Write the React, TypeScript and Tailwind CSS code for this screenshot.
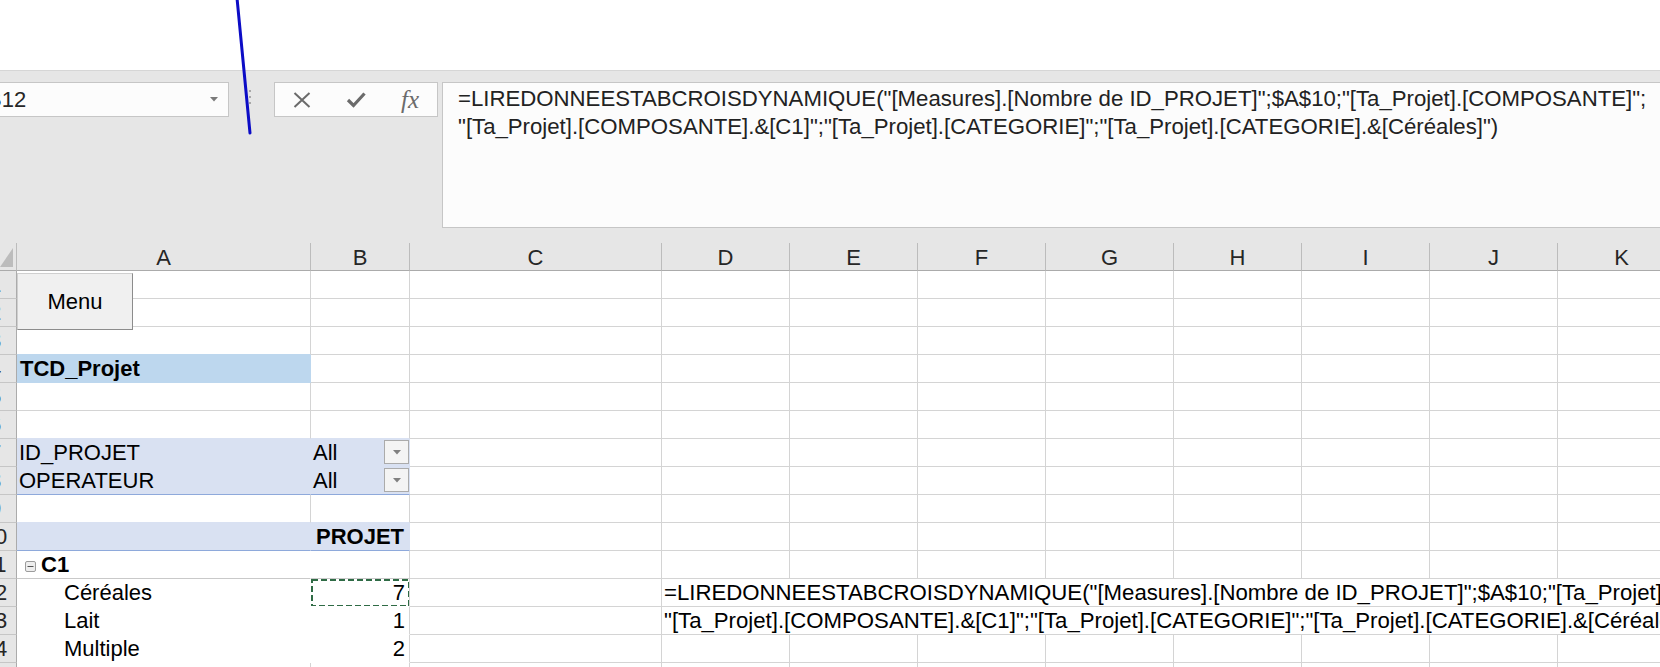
import React from 'react';

const formulaLine1 =
  '=LIREDONNEESTABCROISDYNAMIQUE("[Measures].[Nombre de ID_PROJET]";$A$10;"[Ta_Projet].[COMPOSANTE]";';
const formulaLine2 =
  '"[Ta_Projet].[COMPOSANTE].&[C1]";"[Ta_Projet].[CATEGORIE]";"[Ta_Projet].[CATEGORIE].&[Céréales]")';

const columns: { name: string; w: string }[] = [
  { name: 'A', w: 'w-[294px]' },
  { name: 'B', w: 'w-[99px]' },
  { name: 'C', w: 'w-[252px]' },
  { name: 'D', w: 'w-[128px]' },
  { name: 'E', w: 'w-[128px]' },
  { name: 'F', w: 'w-[128px]' },
  { name: 'G', w: 'w-[128px]' },
  { name: 'H', w: 'w-[128px]' },
  { name: 'I', w: 'w-[128px]' },
  { name: 'J', w: 'w-[128px]' },
  { name: 'K', w: 'w-[128px]' },
];

// gridline colours per edge
const GRID = 'border-r-[#d4d4d4] border-b-[#d4d4d4]';

interface RowSpec {
  n: number;
  a?: React.ReactNode;
  b?: React.ReactNode;
  aEdge: string;
  bEdge: string;
  aClass?: string;
  bClass?: string;
  wide?: string;
  selected?: boolean;
}

function Cell({
  w,
  edge,
  className = '',
  children,
}: {
  w: string;
  edge: string;
  className?: string;
  children?: React.ReactNode;
}) {
  return (
    <div
      className={`${w} relative shrink-0 h-full border-r border-b ${edge} flex items-end pb-[2px] whitespace-nowrap overflow-hidden leading-[22px] ${className}`}
    >
      {children}
    </div>
  );
}

function RowHead({ n }: { n: number }) {
  return (
    <div className="w-[17px] shrink-0 h-full overflow-hidden bg-[#e6e6e6] border-r border-b border-r-[#ababab] border-b-[#c6c6c6] flex items-end pb-[2px]">
      <div className="w-[44px] -ml-[27px] shrink-0 text-center leading-[22px] text-[#262626]">{n}</div>
    </div>
  );
}

function FilterButton() {
  return (
    <div className="ml-auto self-start mt-[1px] w-[25px] h-[24px] shrink-0 border border-[#ababab] bg-[#f4f4f4] flex items-center justify-center">
      <svg width="8" height="5" viewBox="0 0 8 5">
        <path d="M0 0h8L4 4.5z" fill="#808080" />
      </svg>
    </div>
  );
}

function CollapseToggle() {
  return (
    <svg className="self-end mb-[4px] ml-[8px] mr-[5px] shrink-0" width="11" height="11" viewBox="0 0 11 11">
      <rect x="0.5" y="0.5" width="10" height="10" rx="1.5" fill="#eeeeee" stroke="#9c9c9c" />
      <path d="M2.5 5.5h6" stroke="#555" strokeWidth="1" />
    </svg>
  );
}

const rows: RowSpec[] = [
  { n: 1, aEdge: GRID, bEdge: GRID },
  { n: 2, aEdge: GRID, bEdge: GRID },
  { n: 3, aEdge: 'border-r-[#d4d4d4] border-b-[#bdd7ee]', bEdge: GRID },
  {
    n: 4,
    a: <span className="pl-[3px] font-bold">TCD_Projet</span>,
    aEdge: 'border-r-[#bdd7ee] border-b-[#bdd7ee]',
    aClass: 'bg-[#bdd7ee]',
    bEdge: GRID,
  },
  { n: 5, aEdge: GRID, bEdge: GRID },
  {
    n: 6,
    aEdge: 'border-r-[#d4d4d4] border-b-[#d9e1f2]',
    bEdge: 'border-r-[#d4d4d4] border-b-[#d9e1f2]',
  },
  {
    n: 7,
    a: <span className="pl-[2px]">ID_PROJET</span>,
    b: (
      <>
        <span className="pl-[2px]">All</span>
        <FilterButton />
      </>
    ),
    aEdge: 'border-r-[#d9e1f2] border-b-[#d9e1f2]',
    bEdge: 'border-r-[#d9e1f2] border-b-[#d9e1f2]',
    aClass: 'bg-[#d9e1f2]',
    bClass: 'bg-[#d9e1f2]',
  },
  {
    n: 8,
    a: <span className="pl-[2px]">OPERATEUR</span>,
    b: (
      <>
        <span className="pl-[2px]">All</span>
        <FilterButton />
      </>
    ),
    aEdge: 'border-r-[#d9e1f2] border-b-[#8ea9db]',
    bEdge: 'border-r-[#d9e1f2] border-b-[#8ea9db]',
    aClass: 'bg-[#d9e1f2]',
    bClass: 'bg-[#d9e1f2]',
  },
  {
    n: 9,
    aEdge: 'border-r-[#d4d4d4] border-b-[#d9e1f2]',
    bEdge: 'border-r-[#d4d4d4] border-b-[#d9e1f2]',
  },
  {
    n: 10,
    b: <span className="font-bold">PROJET</span>,
    aEdge: 'border-r-[#d9e1f2] border-b-[#8ea9db]',
    bEdge: 'border-r-[#d9e1f2] border-b-[#8ea9db]',
    aClass: 'bg-[#d9e1f2]',
    bClass: 'bg-[#d9e1f2] justify-end pr-[5px]',
  },
  {
    n: 11,
    a: (
      <>
        <CollapseToggle />
        <span className="font-bold">C1</span>
      </>
    ),
    aEdge: 'border-r-white border-b-[#c9c9c9]',
    bEdge: 'border-r-[#d4d4d4] border-b-[#c9c9c9]',
  },
  {
    n: 12,
    a: <span className="pl-[47px]">Céréales</span>,
    b: <span>7</span>,
    aEdge: 'border-r-white border-b-white',
    bEdge: 'border-r-[#d4d4d4] border-b-white',
    bClass: 'justify-end pr-[4px]',
    wide: formulaLine1,
    selected: true,
  },
  {
    n: 13,
    a: <span className="pl-[47px]">Lait</span>,
    b: <span>1</span>,
    aEdge: 'border-r-white border-b-white',
    bEdge: 'border-r-[#d4d4d4] border-b-white',
    bClass: 'justify-end pr-[4px]',
    wide: formulaLine2,
  },
  {
    n: 14,
    a: <span className="pl-[47px]">Multiple</span>,
    b: <span>2</span>,
    aEdge: 'border-r-white border-b-white',
    bEdge: 'border-r-[#d4d4d4] border-b-white',
    bClass: 'justify-end pr-[4px]',
  },
  { n: 15, aEdge: GRID, bEdge: GRID },
];

function FormulaBar() {
  return (
    <div className="h-[173px] shrink-0 bg-[#e6e6e6] border-t border-[#d6d6d6] pt-[11px] flex items-start">
      {/* name box */}
      <div className="w-[229px] h-[35px] shrink-0 bg-[#fcfcfc] border-y border-r border-[#c6c6c6] flex items-center overflow-hidden">
        <span className="-ml-[13px] leading-[22px] text-[#262626]">B12</span>
        <svg className="ml-auto mr-[10px]" width="8" height="5" viewBox="0 0 8 5">
          <path d="M0 0h8L4 4.5z" fill="#7a7a7a" />
        </svg>
      </div>

      {/* splitter grip */}
      <div className="w-[45px] h-[35px] shrink-0 flex flex-col pl-[20px] pt-[8px] gap-[4px]">
        <div className="w-[2px] h-[2px] bg-[#a8a8a8]" />
        <div className="w-[2px] h-[2px] bg-[#a8a8a8]" />
        <div className="w-[2px] h-[2px] bg-[#a8a8a8]" />
      </div>

      {/* cancel / enter / insert function */}
      <div className="w-[164px] h-[35px] shrink-0 bg-[#fcfcfc] border border-[#c6c6c6] flex items-center">
        <div className="w-[54px] flex justify-center">
          <svg width="18" height="16" viewBox="0 0 18 16">
            <path d="M1.5 1l15 14M16.5 1l-15 14" stroke="#6b6b6b" strokeWidth="2" />
          </svg>
        </div>
        <div className="w-[54px] flex justify-center">
          <svg width="20" height="17" viewBox="0 0 20 17">
            <path d="M2 9l5.5 5.5L18.5 2.5" fill="none" stroke="#6b6b6b" strokeWidth="3.2" />
          </svg>
        </div>
        <div className="w-[54px] flex justify-center">
          <span className="font-['Liberation_Serif',serif] italic text-[25px] leading-[25px] text-[#6b6b6b]">fx</span>
        </div>
      </div>

      {/* formula input */}
      <div className="ml-[4px] flex-1 h-[146px] bg-[#fcfcfc] border-y border-l border-[#c6c6c6] pl-[15px] pt-[2px] text-[22.2px] leading-[28px] text-[#222] whitespace-nowrap overflow-hidden">
        <div>{formulaLine1}</div>
        <div>{formulaLine2}</div>
      </div>
    </div>
  );
}

function ColumnHeaders() {
  return (
    <div className="flex h-[28px] shrink-0 bg-[#e6e6e6]">
      <div className="w-[17px] shrink-0 h-full border-r border-b border-r-[#bcbcbc] border-b-[#ababab]">
        <svg width="16" height="27" viewBox="0 0 16 27">
          <path d="M13 5v19H0z" fill="#bcbcbc" />
        </svg>
      </div>
      {columns.map((c) => (
        <div
          key={c.name}
          className={`${c.w} shrink-0 h-full border-r border-b border-r-[#bcbcbc] border-b-[#ababab] flex items-center justify-center pt-[2px] leading-[22px] text-[#262626]`}
        >
          {c.name}
        </div>
      ))}
    </div>
  );
}

function SheetRow({ row }: { row: RowSpec }) {
  const rest = columns.slice(3);
  return (
    <div className="flex h-[28px] shrink-0">
      <RowHead n={row.n} />
      <Cell w="w-[294px]" edge={row.aEdge} className={row.aClass}>
        {row.a}
      </Cell>
      <Cell w="w-[99px]" edge={row.bEdge} className={row.bClass}>
        {row.b}
        {row.selected && (
          <svg className="absolute left-0 top-0" width="99" height="28" viewBox="0 0 99 28">
            <rect x="1" y="1" width="97" height="26" fill="none" stroke="#2f6b45" strokeWidth="2" strokeDasharray="6 3" />
          </svg>
        )}
      </Cell>
      <Cell w="w-[252px]" edge={GRID} />
      {row.wide ? (
        <div className="w-[1024px] shrink-0 h-full border-b border-b-[#d4d4d4] flex items-end pb-[2px] pl-[2px] whitespace-nowrap overflow-hidden text-[22.2px] leading-[22px]">
          {row.wide}
        </div>
      ) : (
        rest.map((c) => <Cell key={c.name} w={c.w} edge={GRID} />)
      )}
    </div>
  );
}

export default function App() {
  return (
    <div className="relative w-[1660px] h-[667px] overflow-hidden bg-white font-['Liberation_Sans',Arial,sans-serif] text-[22px] text-black flex flex-col">
      <div className="h-[70px] shrink-0 bg-white" />
      <FormulaBar />
      <ColumnHeaders />
      {rows.map((r) => (
        <SheetRow key={r.n} row={r} />
      ))}

      {/* form button floating over rows 1-2 */}
      <div className="absolute left-[17px] top-[273px] w-[116px] h-[57px] bg-[#f0f0f0] border border-[#cfcfcf] border-r-[#8c8c8c] border-b-[#8c8c8c] flex items-center justify-center leading-[22px]">
        Menu
      </div>

      {/* pen stroke drawn over the toolbar */}
      <svg className="absolute left-0 top-0 pointer-events-none" width="300" height="140" viewBox="0 0 300 140">
        <path d="M237 -2L250 133" stroke="#0c0cc6" strokeWidth="3" strokeLinecap="round" />
      </svg>
    </div>
  );
}
